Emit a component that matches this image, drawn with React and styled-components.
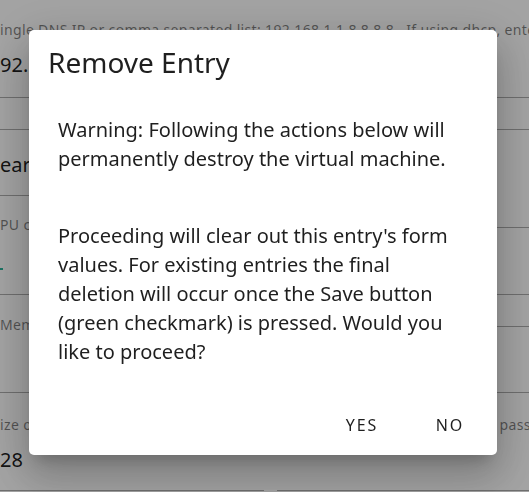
import styled, { createGlobalStyle } from "styled-components";

const GlobalStyle = createGlobalStyle`
  html, body {
    margin: 0;
    padding: 0;
    background: #ffffff;
    font-family: "Noto Sans", "Open Sans", sans-serif;
    overflow: hidden;
  }
`;

const Page = styled.div`
  width: 529px;
  height: 492px;
  overflow: hidden;
  color: rgba(0, 0, 0, 0.87);
`;

const Field = styled.div`
  box-sizing: border-box;
  height: ${(p) => p.h}px;
  padding-top: ${(p) => p.pt || 0}px;
  border-bottom: 1px solid rgba(0, 0, 0, 0.32);
  display: flex;
  flex-direction: column;
  gap: 10px;
  overflow: hidden;
  white-space: nowrap;
`;

const Helper = styled.div`
  font-size: 14px;
  line-height: 20px;
  letter-spacing: 0.35px;
  color: rgba(0, 0, 0, 0.5);
`;

const Value = styled.div`
  font-size: 20px;
  line-height: 30px;
  color: rgba(0, 0, 0, 0.9);
`;

const Tick = styled.div`
  width: 3px;
  height: 2px;
  margin-top: 23px;
  background: #2bb39a;
`;

const Columns = styled.div`
  display: grid;
  grid-template-columns: 264px 1fr;
  column-gap: 13px;
`;

const Column = styled.div`
  display: flex;
  flex-direction: column;
`;

const Overlay = styled.div`
  position: fixed;
  inset: 0;
  background: rgba(0, 0, 0, 0.36);
  display: flex;
  align-items: flex-start;
  padding: 30px 0 0 29px;
`;

const Dialog = styled.div`
  width: 468px;
  background: #ffffff;
  border-radius: 5px;
  box-shadow: 0px 11px 15px -7px rgba(0, 0, 0, 0.2),
    0px 24px 38px 3px rgba(0, 0, 0, 0.14), 0px 9px 46px 8px rgba(0, 0, 0, 0.12);
  display: flex;
  flex-direction: column;
  color: #1f1f1f;
`;

const Title = styled.h2`
  margin: 0;
  padding: 13px 19px 0;
  font-size: 28px;
  line-height: 38px;
  font-weight: 400;
`;

const Content = styled.div`
  padding: 33.7px 28px 31.3px 29px;
  font-size: 20px;
  line-height: 29px;
`;

const Para = styled.p`
  margin: ${(p) => (p.first ? 0 : "48px")} 0 0;
`;

const Actions = styled.div`
  display: flex;
  justify-content: flex-end;
  gap: 24px;
  padding: 8px 15px 10px;
`;

const Button = styled.button`
  min-width: 64px;
  padding: 6px 8px;
  border: none;
  background: transparent;
  font-family: inherit;
  font-size: 16px;
  line-height: 28px;
  letter-spacing: 2px;
  text-transform: uppercase;
  color: #1f1f1f;
  cursor: pointer;
`;

export default function App() {
  return (
    <>
      <GlobalStyle />
      <Page>
        <Field h={98} pt={20}>
          <Helper>
            ingle DNS IP or comma separated list: 192.168.1.1,8.8.8.8 . If using
            dhcp, enter dhcp
          </Helper>
          <Value>92.168.1.1</Value>
        </Field>
        <Field h={32} />
        <Columns>
          <Column>
            <Field h={66} pt={20}>
              <Value>ear</Value>
            </Field>
            <Field h={99} pt={19}>
              <Helper>PU cores</Helper>
              <Tick />
            </Field>
            <Field h={98} pt={20}>
              <Helper>Memory</Helper>
            </Field>
            <Field h={98} pt={22}>
              <Helper>ize of disk</Helper>
              <Value>28</Value>
            </Field>
          </Column>
          <Column>
            <Field h={98} />
            <Field h={67} />
            <Field h={32} />
            <Field h={66} />
            <Field h={98} pt={22}>
              <Helper>Leave blank to keep the current passphrase</Helper>
            </Field>
          </Column>
        </Columns>
      </Page>
      <Overlay>
        <Dialog>
          <Title>Remove Entry</Title>
          <Content>
            <Para first>
              Warning: Following the actions below will permanently destroy the
              virtual machine.
            </Para>
            <Para>
              Proceeding will clear out this entry's form values. For existing
              entries the final deletion will occur once the Save button (green
              checkmark) is pressed. Would you like to proceed?
            </Para>
          </Content>
          <Actions>
            <Button>Yes</Button>
            <Button>No</Button>
          </Actions>
        </Dialog>
      </Overlay>
    </>
  );
}
